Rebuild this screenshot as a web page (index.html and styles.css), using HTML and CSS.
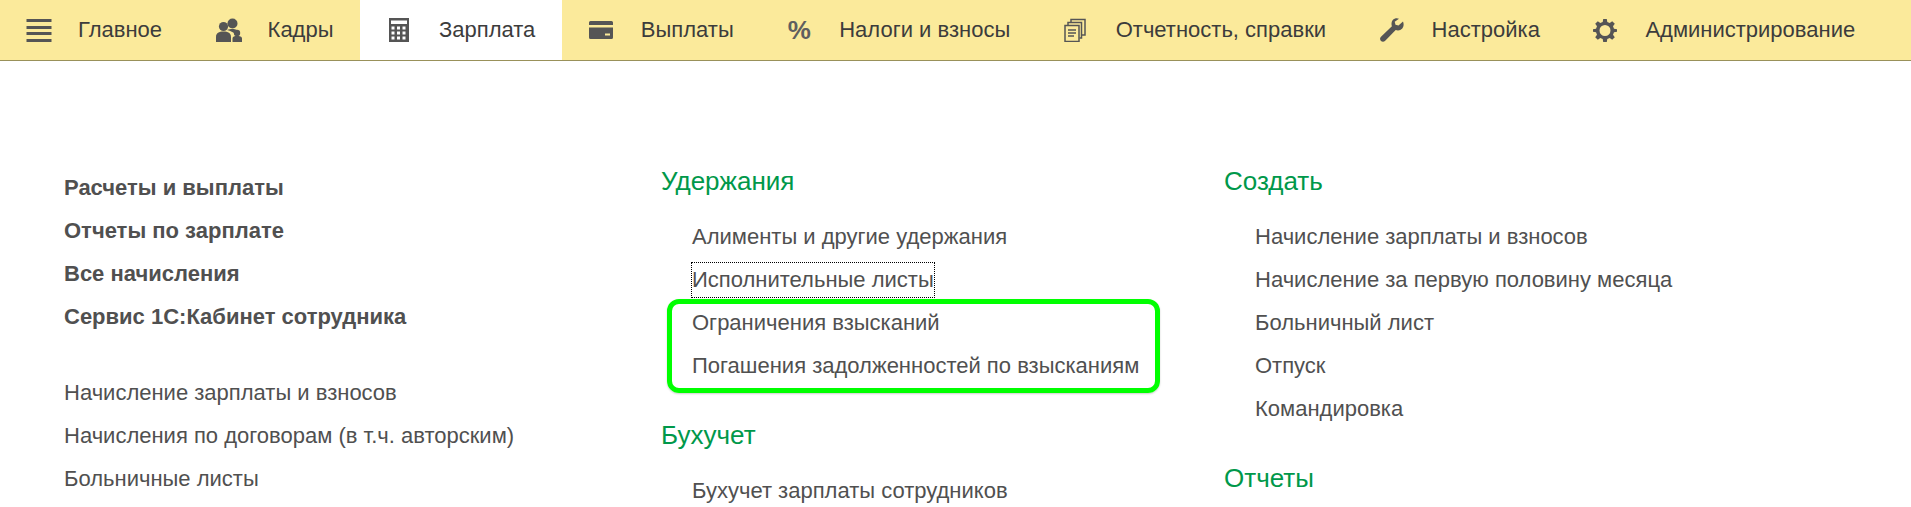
FILE: index.html
```html
<!DOCTYPE html>
<html lang="ru">
<head>
<meta charset="utf-8">
<title>Зарплата</title>
<link rel="stylesheet" href="styles.css">
</head>
<body>
<nav class="topbar">
  <a class="tab tab-first">
    <svg class="ico ico-wide" viewBox="0 0 25 24"><path d="M0 1h25v3H0zM0 8h25v3H0zM0 14h25v3H0zM0 21h25v3H0z"/></svg>
    <span>Главное</span>
  </a>
  <a class="tab">
    <svg class="ico ico-wide" viewBox="0 0 26 24"><circle cx="16.500" cy="5.500" r="5"/><circle cx="7.500" cy="8.500" r="4.600"/><circle cx="21" cy="15" r="3.200"/><path d="M0 24v-5c0-4 3-5.500 7.500-5.500S15 15 15 19v5zM11 12c2-.6 3.500-1 5.500-1s3 .4 4 1c-2 1-2.500 2-2 3.500-1.500-1.200-3.500-2.500-7.500-3.500zM16.500 24v-3.500c0-2 2-2.500 4.500-2.500s5 .5 5 2.500V24z"/></svg>
    <span>Кадры</span>
  </a>
  <a class="tab tab-active">
    <svg class="ico" viewBox="0 0 24 24"><path fill-rule="evenodd" d="M2 0h20v24H2zM4 2.500v3.500h16V2.500zM4.500 8.500v3h3v-3zM10 8.500v3h3v-3zM15.500 8.500v3h3v-3zM4.500 13.500v3h3v-3zM10 13.500v3h3v-3zM15.500 13.500v3h3v-3zM4.500 18.500v3h3v-3zM10 18.500v3h3v-3zM15.500 18.500v3h3v-3z"/></svg>
    <span>Зарплата</span>
  </a>
  <a class="tab">
    <svg class="ico" viewBox="0 0 24 24"><path fill-rule="evenodd" d="M1.500 3h21A1.500 1.500 0 0 1 24 4.500V7H0V4.500A1.500 1.500 0 0 1 1.500 3zM0 9.500h24v10a1.500 1.500 0 0 1-1.500 1.500h-21A1.500 1.500 0 0 1 0 19.500zM16 15.500v2h5v-2z"/></svg>
    <span>Выплаты</span>
  </a>
  <a class="tab">
    <span class="ico ico-pct">%</span>
    <span>Налоги и взносы</span>
  </a>
  <a class="tab">
    <svg class="ico" viewBox="0 0 24 24"><g fill="none" stroke-width="1.500"><path d="M1 7.500h14v16H1z"/><path d="M4 7V4.500h13.500V20H15.500M7 4V1.500h14V17h-3.500"/><path d="M4 12h8M4 15h8M4 18h6" stroke-width="1.300"/></g></svg>
    <span>Отчетность, справки</span>
  </a>
  <a class="tab">
    <svg class="ico" viewBox="0 0 24 24"><path d="M23 3.500l-4.500 4-3-.8-.8-3L19 .8C15.500-.8 11.500 1.500 11.500 6c0 1 .2 1.700.4 2.300L1 18.800c-1.500 1.500-1 3.200 0 4.200s2.800 1.300 4.200-.2L15.700 12c.8.300 1.500.4 2.300.4 4.500 0 6.800-4.500 5-8.900z"/></svg>
    <span>Настройка</span>
  </a>
  <a class="tab">
    <svg class="ico" viewBox="0 0 24 24"><path fill-rule="evenodd" d="M10.200 1h3.600l.5 3 2.400 1 2.500-1.800 2.600 2.600L20 8.300l1 2.400 3 .5v2.600l-3 .5-1 2.400 1.800 2.500-2.600 2.600-2.500-1.800-2.400 1-.5 3h-3.600l-.5-3-2.400-1-2.500 1.800-2.600-2.600L4 16.700l-1-2.400-3-.5v-2.600l3-.5 1-2.400-1.800-2.500 2.600-2.600L7.300 5l2.400-1zM12 7a5.500 5.500 0 1 0 0 11 5.500 5.500 0 0 0 0-11z"/></svg>
    <span>Администрирование</span>
  </a>
</nav>

<main class="panel">
  <section class="col col-main">
    <ul class="links links-strong">
      <li><a>Расчеты и выплаты</a></li>
      <li><a>Отчеты по зарплате</a></li>
      <li><a>Все начисления</a></li>
      <li><a>Сервис 1С:Кабинет сотрудника</a></li>
    </ul>
    <ul class="links links-plain">
      <li><a>Начисление зарплаты и взносов</a></li>
      <li><a>Начисления по договорам (в т.ч. авторским)</a></li>
      <li><a>Больничные листы</a></li>
    </ul>
  </section>

  <section class="col">
    <h2 class="group">Удержания</h2>
    <ul class="links links-sub">
      <li><a>Алименты и другие удержания</a></li>
      <li><a class="focused">Исполнительные листы</a></li>
      <li><a>Ограничения взысканий</a></li>
      <li><a>Погашения задолженностей по взысканиям</a></li>
    </ul>
    <h2 class="group group-next">Бухучет</h2>
    <ul class="links links-sub">
      <li><a>Бухучет зарплаты сотрудников</a></li>
    </ul>
    <div class="highlight"></div>
  </section>

  <section class="col">
    <h2 class="group">Создать</h2>
    <ul class="links links-sub">
      <li><a>Начисление зарплаты и взносов</a></li>
      <li><a>Начисление за первую половину месяца</a></li>
      <li><a>Больничный лист</a></li>
      <li><a>Отпуск</a></li>
      <li><a>Командировка</a></li>
    </ul>
    <h2 class="group group-next">Отчеты</h2>
  </section>
</main>
</body>
</html>
```
FILE: styles.css
```css
* { box-sizing: border-box; }
html, body { margin: 0; height: 507px; overflow: hidden; background: #fff; }
body { font-family: "Liberation Sans", Arial, sans-serif; color: #505050; }

.topbar {
  display: flex;
  height: 61px;
  background: #fbea9b;
  border-bottom: 1px solid #99915a;
  font-size: 22px;
  color: #3c3c3c;
}
.tab {
  display: flex;
  align-items: center;
  gap: 28px;
  height: 60px;
  padding: 0 26.75px;
  white-space: nowrap;
}
.tab-first { padding-left: 26px; }
.tab-active { background: #fff; }
.ico { flex: none; width: 24px; height: 24px; fill: #555; stroke: #555; stroke-width: 0; }
.ico-wide { width: 26px; margin-right: -2px; }
.ico-pct {
  font-size: 26px;
  font-weight: 700;
  line-height: 24px;
  color: #5f5f5f;
  text-align: center;
}

.panel {
  display: grid;
  grid-template-columns: 661px 563px 1fr;
}
.col { position: relative; padding-top: 102px; }
.col-main { padding-left: 64px; padding-top: 110px; }

.group {
  margin: 0;
  height: 36px;
  line-height: 36px;
  font-size: 26px;
  font-weight: 400;
  color: #00984a;
}
.group-next { margin-top: 34px; }

.links { list-style: none; margin: 0; padding: 0; font-size: 22px; }
.links li { height: 34px; line-height: 34px; margin-bottom: 9px; white-space: nowrap; }
.links-strong { font-weight: 700; margin-bottom: 42px; }
.links-sub { padding-left: 31px; margin-top: 21px; }
.links-sub li:last-child { margin-bottom: 0; }
.focused { display: inline-block; height: 34px; outline: 1px dotted #000; outline-offset: 0; }

.highlight {
  position: absolute;
  left: 6px;
  top: 238px;
  width: 493px;
  height: 94px;
  border: 5px solid #00ff00;
  border-radius: 12px;
  box-shadow: 0 1px 2px rgba(0, 0, 0, .2);
}
```
